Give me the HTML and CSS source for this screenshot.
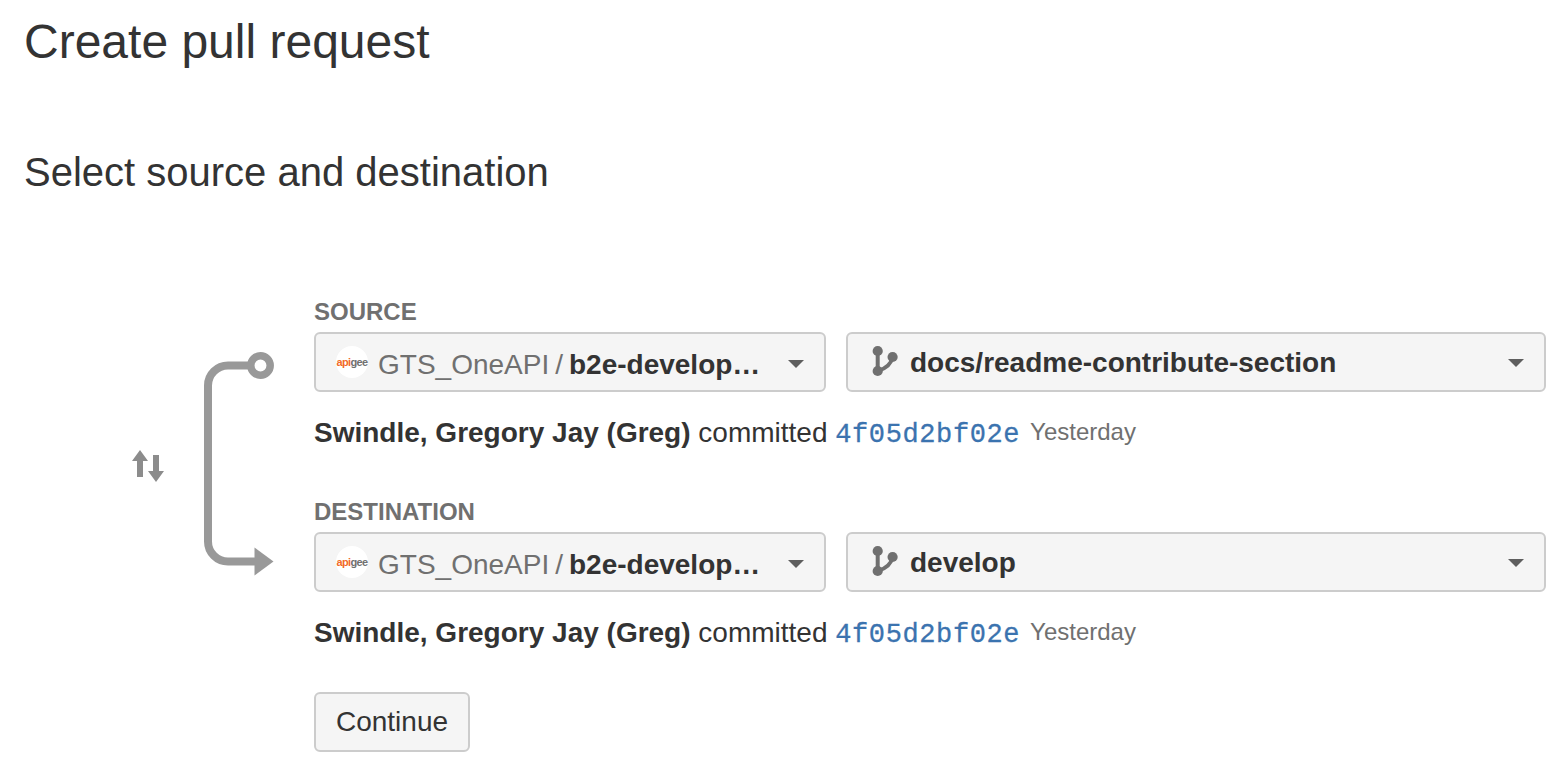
FILE: index.html
```html
<!DOCTYPE html>
<html lang="en">
<head>
<meta charset="utf-8">
<title>Create pull request</title>
<link rel="stylesheet" href="styles.css">
</head>
<body>
<svg width="0" height="0" class="defs" aria-hidden="true">
  <symbol id="branch" viewBox="0 0 26 32">
    <path d="M5.700 6V26M20.600 12C19.500 18 15 23 6 26" fill="none" stroke="#707070" stroke-width="4"/>
    <circle cx="5.700" cy="6" r="5.100" fill="#707070"/>
    <circle cx="20.600" cy="12" r="5.100" fill="#707070"/>
    <circle cx="5.700" cy="26" r="5.100" fill="#707070"/>
  </symbol>
</svg>
<main class="page">
  <h1 class="title">Create pull request</h1>
  <h2 class="subtitle">Select source and destination</h2>
  <div class="form">
    <div class="flow">
      <svg class="swap" width="34" height="34" viewBox="0 0 34 34" fill="#8c8c8c">
        <path d="M9 1 17 12H12V28H6V12H1ZM25 33 17 22H22V6H28V22H33Z"/>
      </svg>
      <svg class="connector" width="74" height="228" viewBox="0 0 74 228">
        <path d="M50 17.500H28A20 20 0 0 0 8 37.500V193.500A20 20 0 0 0 28 213.500H55" fill="none" stroke="#999" stroke-width="8"/>
        <circle cx="60.500" cy="17.500" r="9.700" fill="#fff" stroke="#999" stroke-width="7.500"/>
        <path d="M54.500 199.500 73.500 213.500 54.500 227.500Z" fill="#999"/>
      </svg>
    </div>
    <div class="fields">
      <section class="endpoint">
        <h3 class="label">SOURCE</h3>
        <div class="selects">
          <div class="select repo">
            <span class="avatar"><span class="api">api</span>gee</span>
            <span class="owner">GTS_OneAPI</span><span class="slash">/</span><strong>b2e-develop…</strong>
            <span class="caret"></span>
          </div>
          <div class="select branch">
            <svg class="branch-icon"><use href="#branch"/></svg>
            <strong>docs/readme-contribute-section</strong>
            <span class="caret"></span>
          </div>
        </div>
        <p class="commit"><strong>Swindle, Gregory Jay (Greg)</strong> committed <a class="hash">4f05d2bf02e</a><time class="when">Yesterday</time></p>
      </section>
      <section class="endpoint">
        <h3 class="label">DESTINATION</h3>
        <div class="selects">
          <div class="select repo">
            <span class="avatar"><span class="api">api</span>gee</span>
            <span class="owner">GTS_OneAPI</span><span class="slash">/</span><strong>b2e-develop…</strong>
            <span class="caret"></span>
          </div>
          <div class="select branch">
            <svg class="branch-icon"><use href="#branch"/></svg>
            <strong>develop</strong>
            <span class="caret"></span>
          </div>
        </div>
        <p class="commit"><strong>Swindle, Gregory Jay (Greg)</strong> committed <a class="hash">4f05d2bf02e</a><time class="when">Yesterday</time></p>
      </section>
      <button class="continue">Continue</button>
    </div>
  </div>
</main>
</body>
</html>
```
FILE: styles.css
```css
* { box-sizing: border-box; }
body {
  margin: 0;
  background: #fff;
  color: #333;
  font: 28px/40px "Liberation Sans", Arial, sans-serif;
  overflow: hidden;
}
.defs { display: block; height: 0; }
.page { height: 768px; padding: 14px 22px 0 24px; }
.title { margin: 0; font-size: 48px; font-weight: 400; line-height: 56px; }
.subtitle { margin: 78px 0 0; font-size: 40px; font-weight: 400; line-height: 48px; }
.form { display: flex; margin-top: 104px; }
.flow { display: flex; width: 290px; padding: 48px 0 0 107px; }
.swap { margin: 101px 35px 0 0; flex: none; }
.connector { flex: none; }
.fields { flex: 1; }
.endpoint { height: 200px; }
.endpoint:last-of-type { height: 192px; }
.label { margin: 0; color: #707070; font-size: 24px; line-height: 24px; height: 32px; }
.selects { display: grid; grid-template-columns: 512px 700px; gap: 20px; }
.select {
  display: flex;
  align-items: center;
  height: 60px;
  padding: 2px 20px 0;
  background: #f5f5f5;
  border: 2px solid #ccc;
  border-radius: 6px;
  white-space: nowrap;
}
.repo { padding-top: 6px; }
.avatar {
  display: flex;
  align-items: center;
  justify-content: center;
  width: 32px;
  height: 32px;
  margin: -6px 10px 0 0;
  border-radius: 50%;
  background: #fff;
  color: #707070;
  font: bold 11px/12px "Liberation Sans", Arial, sans-serif;
  letter-spacing: -0.6px;
}
.api { color: #f26a28; }
.owner { color: #707070; }
.slash { color: #707070; margin: 0 6px; }
.caret {
  width: 16px;
  height: 8px;
  margin-left: auto;
  background: #5e5e5e;
  clip-path: polygon(0 0, 100% 0, 50% 100%);
}
.repo .caret { margin-top: -2px; }
.branch { padding-left: 24px; }
.branch .caret { margin-top: 0; }
.branch-icon { width: 26px; height: 32px; margin: -4px 12px 0 0; }
.commit { display: flex; align-items: baseline; margin: 21px 0 0; height: 40px; white-space: pre; }
.hash {
  color: #3b73af;
  font: 27px/36px "Liberation Mono", "Courier New", monospace;
  letter-spacing: 0.6px;
  -webkit-text-stroke: 0.3px #3b73af;
}
.when { margin-left: 10px; color: #707070; font-size: 24px; transform: translateY(-2px); }
.continue {
  display: block;
  width: 156px;
  height: 60px;
  padding: 0;
  background: #f5f5f5;
  border: 2px solid #ccc;
  border-radius: 6px;
  color: #333;
  font: 28px/40px "Liberation Sans", Arial, sans-serif;
}
```
